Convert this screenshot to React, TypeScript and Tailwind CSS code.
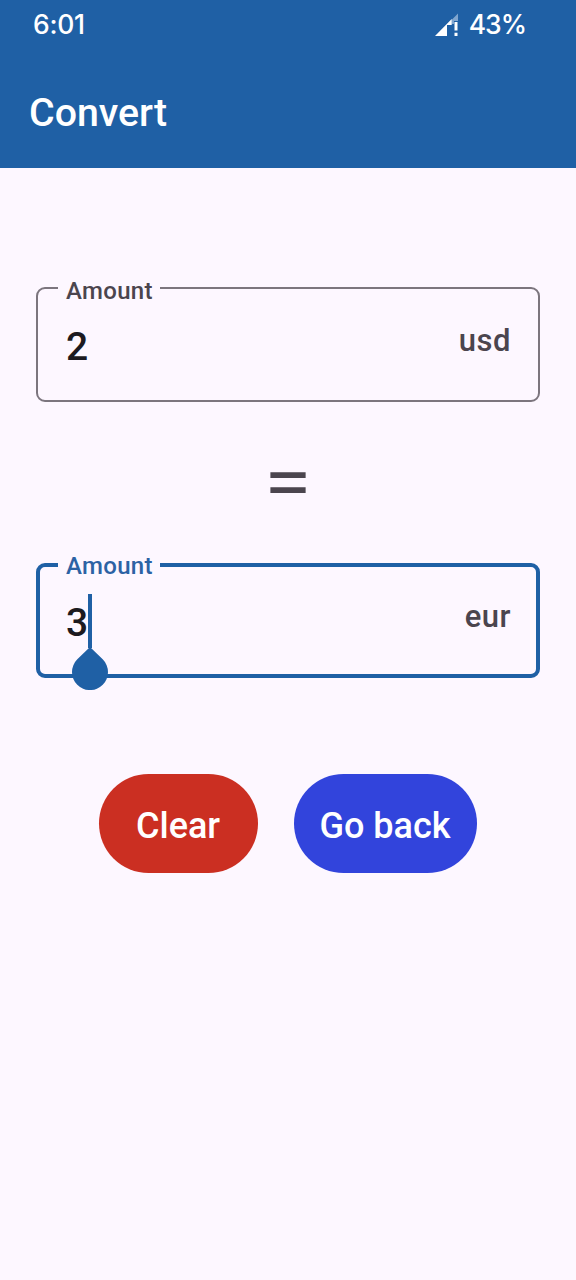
import React from 'react';

type AmountFieldProps = {
  value: string;
  currency: string;
  focused?: boolean;
};

function AmountField({ value, currency, focused = false }: AmountFieldProps) {
  return (
    <fieldset
      className={
        focused
          ? 'h-[125px] w-[504px] rounded-[9px] border-4 border-[#1f60a5] px-[18px]'
          : 'h-[126px] w-[504px] rounded-[9px] border-2 border-[#7c757e] px-5'
      }
    >
      <legend
        className={
          focused
            ? 'h-6 w-[102px] pl-2 text-[24px] leading-[27px] font-medium tracking-[0.3px] text-[#2c62a4]'
            : 'h-6 w-[102px] pl-2 text-[24px] leading-[30px] font-medium tracking-[0.3px] text-[#4b454e]'
        }
      >
        Amount
      </legend>
      <div className="flex justify-between pr-[7px] pl-2">
        <div
          className={
            focused
              ? 'flex h-[54px] pt-[17px] text-[39px] leading-[58px] font-medium text-[#1c1a20]'
              : 'flex h-[54px] pt-[18px] text-[39px] leading-[58px] font-medium text-[#1c1a20]'
          }
        >
          <span>{value}</span>
          {focused && (
            <span className="relative h-[54px] w-1 shrink-0 bg-[#1f60a5]">
              <svg
                className="absolute top-[53px] -left-4 h-[43px] w-9"
                viewBox="0 0 36 43"
                fill="#1f60a5"
              >
                <path d="M18 0 L30.7 12.3 A18 18 0 1 1 5.3 12.3 Z" />
              </svg>
            </span>
          )}
        </div>
        <span
          className={
            focused
              ? 'pt-[20px] text-[31px] leading-[40px] font-medium tracking-[0.5px] text-[#4b454e]'
              : 'pt-[21px] text-[31px] leading-[40px] font-medium tracking-[0.5px] text-[#4b454e]'
          }
        >
          {currency}
        </span>
      </div>
    </fieldset>
  );
}

export default function App() {
  return (
    <div className="flex h-[1280px] w-[576px] flex-col overflow-hidden bg-[#fdf7ff] font-['Roboto',sans-serif]">
      <header className="h-[168px] shrink-0 bg-[#1f60a5] text-white">
        <div className="flex h-12 items-center justify-between pr-[50px] pl-[33px] font-['Inter',sans-serif] text-[26.5px] font-medium">
          <span className="pt-px tracking-[-0.3px]">6:01</span>
          <div className="flex items-center gap-[11px]">
            <svg className="mt-0.5 h-6 w-6" viewBox="0 0 24 24">
              <path d="M24 0.5 V8 H20 V11 H17.5 V7 Z" fill="#7fa5cf" />
              <path d="M1 23 L17.7 6 V12 H13 V23 Z" fill="#fff" />
              <path d="M20.5 9 H23.5 V17.5 H20.5 Z M20.5 19.7 H23.5 V23 H20.5 Z" fill="#fff" />
            </svg>
            <span className="pt-px tracking-[-1px]">43%</span>
          </div>
        </div>
        <h1 className="pt-[42px] pl-[29px] text-[39.3px] leading-[47px] font-medium">Convert</h1>
      </header>
      <main className="flex flex-col items-center pt-[108px]">
        <AmountField value="2" currency="usd" />
        <div className="flex h-[151px] scale-x-[1.2] items-center pt-[11px] text-[72px] leading-[72px] text-[#4b454e]">
          =
        </div>
        <AmountField value="3" currency="eur" focused />
        <div className="mt-24 flex gap-9">
          <button className="h-[99px] w-[159px] rounded-full bg-[#cb2f22] pt-1 pr-px text-[36px] font-medium text-white">
            Clear
          </button>
          <button className="h-[99px] w-[183px] rounded-full bg-[#3244dc] pt-1 pr-px text-[36px] font-medium text-white">
            Go back
          </button>
        </div>
      </main>
    </div>
  );
}
